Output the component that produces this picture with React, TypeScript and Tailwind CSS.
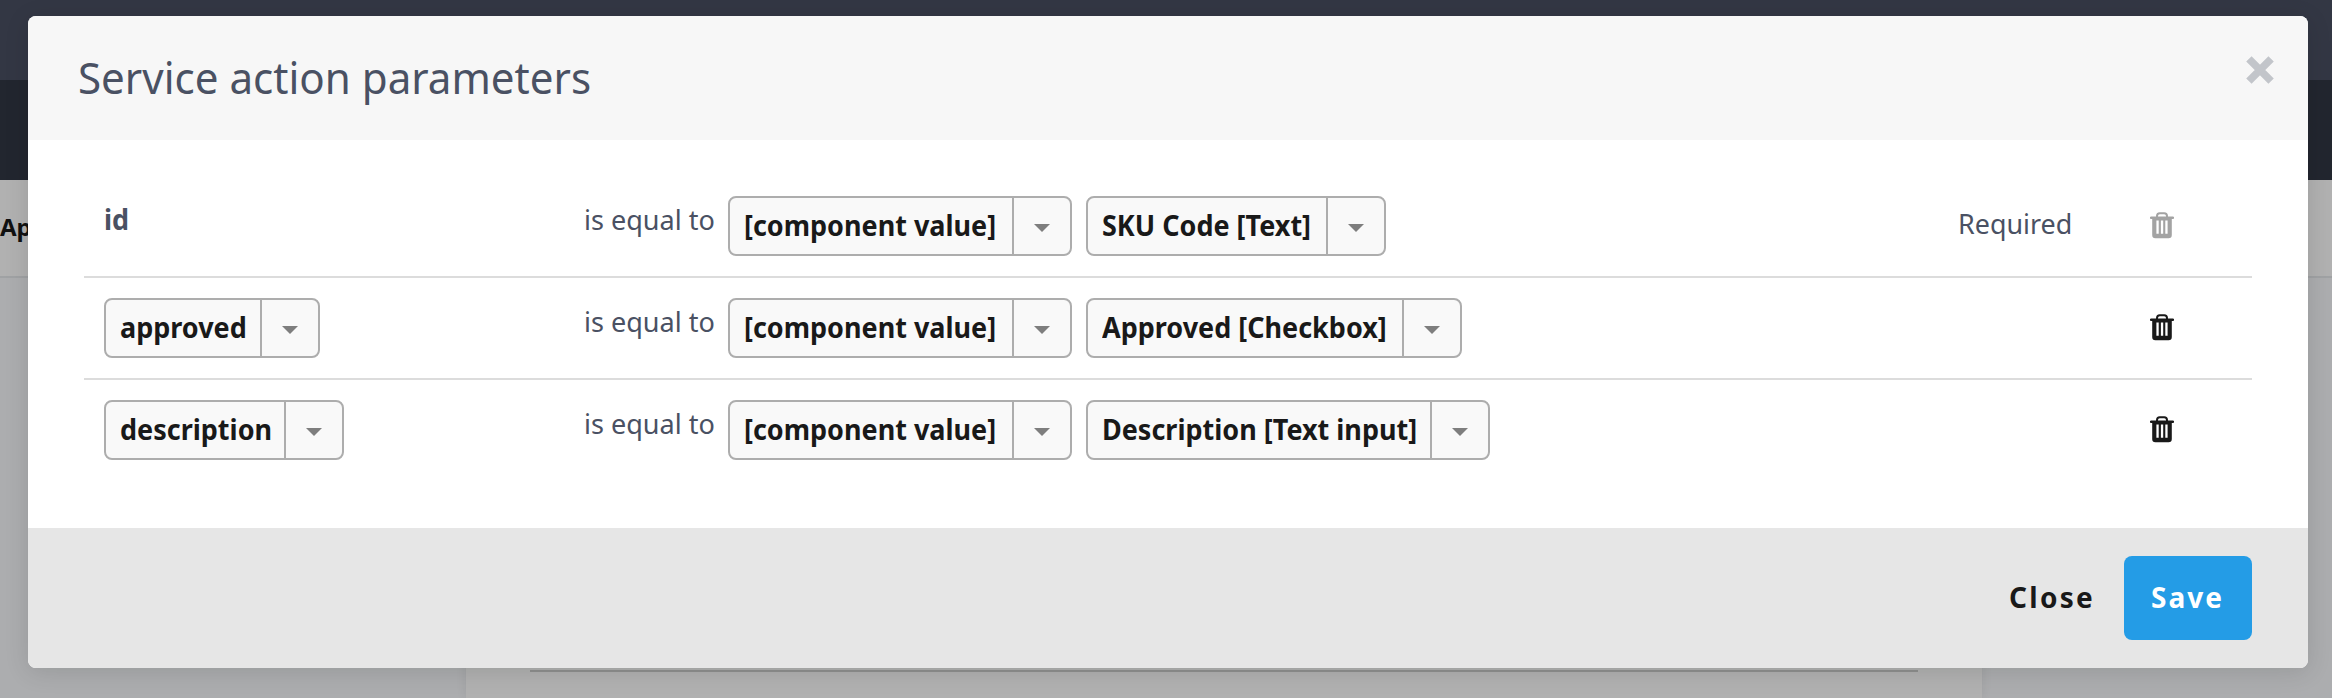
type Rule = {
  name: string;
  nameWidth?: string;
  target: string;
  targetWidth: string;
  required?: boolean;
};

const rules: Rule[] = [
  { name: "id", target: "SKU Code [Text]", targetWidth: "w-[300px]", required: true },
  { name: "approved", nameWidth: "w-[216px]", target: "Approved [Checkbox]", targetWidth: "w-[376px]" },
  { name: "description", nameWidth: "w-[240px]", target: "Description [Text input]", targetWidth: "w-[404px]" },
];

function SplitButton({ label, width }: { label: string; width: string }) {
  return (
    <button
      className={`flex h-[60px] ${width} shrink-0 overflow-hidden rounded-lg border-2 border-[#adadad] bg-[#f9f9f9] text-[#191919]`}
    >
      <span className="min-w-0 flex-1 pl-3.5 text-left text-[28px] leading-[54px] font-bold whitespace-nowrap">
        <span className="inline-block origin-left scale-x-[0.964]">{label}</span>
      </span>
      <span className="flex h-full w-[58px] shrink-0 items-center justify-center border-l-2 border-[#adadad] pt-[3px]">
        <svg width="16" height="8" viewBox="0 0 16 8" fill="#7e7e7e">
          <path d="M0 0h16L8 8z" />
        </svg>
      </span>
    </button>
  );
}

function TrashIcon({ muted }: { muted?: boolean }) {
  return (
    <svg
      width="24"
      height="27"
      viewBox="0 0 24 27"
      className={muted ? "text-[#a3a3a3]" : "text-[#191919]"}
      fill="currentColor"
    >
      <path d="M7 5.5V4q0-2.8 2.8-2.8h4.4q2.8 0 2.8 2.8v1.5" fill="none" stroke="currentColor" strokeWidth="2" />
      <path
        fillRule="evenodd"
        d="M1 4.6h22a1 1 0 0 1 0 2.4h-1.2V23a3.2 3.2 0 0 1-3.2 3.2H5.4a3.2 3.2 0 0 1-3.2-3.2V7H1a1 1 0 0 1 0-2.4zM6.4 8.5v13.3h2.3V8.5zM10.9 8.5v13.3h2.3V8.5zM15.3 8.5v13.3h2.3V8.5z"
      />
    </svg>
  );
}

function RuleRow({ rule, last }: { rule: Rule; last: boolean }) {
  return (
    <div className={`flex items-start pr-[78px] pl-5 ${last ? "" : "mb-5 border-b-2 border-[#dcdcdc] pb-5"}`}>
      <div className="w-[480px] shrink-0">
        {rule.nameWidth ? (
          <SplitButton label={rule.name} width={rule.nameWidth} />
        ) : (
          <span className="block origin-left scale-x-[0.962] text-[28px] leading-[46px] font-bold text-[#4a5163]">
            {rule.name}
          </span>
        )}
      </div>
      <span className="w-36 shrink-0 origin-left scale-x-[0.966] text-[28px] leading-[46px] whitespace-nowrap">
        is equal to
      </span>
      <SplitButton label="[component value]" width="w-[344px]" />
      <div className="ml-3.5">
        <SplitButton label={rule.target} width={rule.targetWidth} />
      </div>
      <div className="ml-auto flex items-start">
        {rule.required && (
          <span className="w-48 origin-left scale-x-[0.96] text-[28px] leading-[54px]">Required</span>
        )}
        <button className="mt-4">
          <TrashIcon muted={rule.required} />
        </button>
      </div>
    </div>
  );
}

export default function App() {
  return (
    <div className="relative h-[698px] w-[2332px] overflow-hidden bg-[#acadaf] font-['Noto_Sans',sans-serif]">
      <div className="flex h-full flex-col">
        <div className="h-20 bg-[#333744]" />
        <div className="h-[100px] bg-[#22262f]" />
        <div className="h-[98px] border-b-2 border-[#a0a2a4] bg-[#b1b1b1]">
          <span className="block text-2xl leading-[93px] font-bold text-[#111]">Ap</span>
        </div>
        <div className="ml-[466px] flex w-[1516px] flex-1 items-end bg-[#b1b1b1] px-16 shadow-[0_0_10px_rgba(0,0,0,0.08)]">
          <div className="mb-[26px] h-0.5 flex-1 bg-[#8f8f8f]" />
        </div>
      </div>

      <div className="absolute top-4 left-7 flex h-[652px] w-[2280px] flex-col overflow-hidden rounded-lg bg-white text-[#4a5163] shadow-[0_4px_24px_rgba(0,20,10,0.12)]">
        <div className="flex h-[124px] items-start justify-between bg-[#f7f7f7] pr-[34px] pl-[50px]">
          <h1 className="origin-left scale-x-[0.957] text-[44px] leading-[122px]">Service action parameters</h1>
          <button className="mt-10">
            <svg width="28" height="28" viewBox="0 0 28 28" fill="none" stroke="#c2c5ca" strokeWidth="7.6">
              <path d="M2.9 2.9l22.2 22.2M25.1 2.9L2.9 25.1" />
            </svg>
          </button>
        </div>

        <div className="flex-1 px-14 pt-14">
          {rules.map((rule, i) => (
            <RuleRow key={rule.name} rule={rule} last={i === rules.length - 1} />
          ))}
        </div>

        <div className="flex h-[140px] items-center justify-end bg-[#e6e6e6] pr-14 text-[28px] font-bold">
          <button className="h-[84px] w-[115px] pb-0.5 text-left tracking-[2.3px] text-[#191919]">Close</button>
          <button className="h-[84px] w-32 rounded-lg bg-[#249ce6] pr-px pb-0.5 text-center tracking-[2px] text-white">
            Save
          </button>
        </div>
      </div>
    </div>
  );
}
